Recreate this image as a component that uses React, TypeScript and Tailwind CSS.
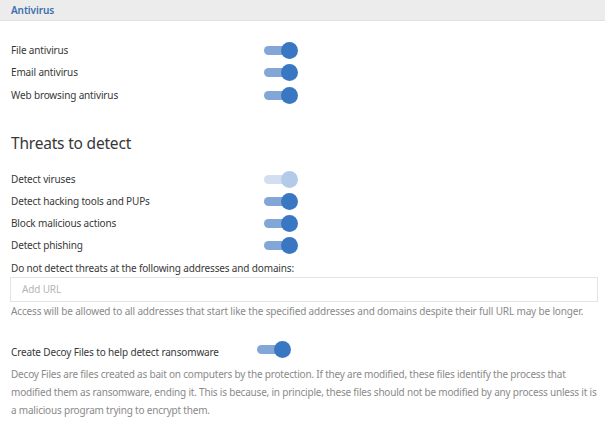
type ToggleProps = { disabled?: boolean };

function Toggle({ disabled }: ToggleProps) {
  return (
    <div className="relative w-[34px] h-[17px] shrink-0">
      <div
        className={`absolute left-0 top-[4px] w-[26px] h-[9px] rounded-full ${
          disabled ? "bg-[#d3dff0]" : "bg-[#82a6d6]"
        }`}
      />
      <div
        className={`absolute right-0 top-0 w-[17px] h-[17px] rounded-full ${
          disabled ? "bg-[#b3cae8]" : "bg-[#3a77c3]"
        }`}
      />
    </div>
  );
}

function Row({ label, disabled, h }: { label: string; disabled?: boolean; h: string }) {
  return (
    <div className={`flex items-center ${h}`}>
      <span className="w-[253px] shrink-0 text-[10px] tracking-[-0.15px] text-[#383838]">{label}</span>
      <Toggle disabled={disabled} />
    </div>
  );
}

export default function App() {
  return (
    <div
      className="w-[605px] h-[427px] bg-white overflow-hidden"
      style={{ fontFamily: '"Noto Sans", "Open Sans", sans-serif' }}
    >
      <div className="h-[21px] bg-[#ececec] border-b border-[#e2e2e2] px-[11px] flex items-center">
        <span className="text-[10px] font-semibold tracking-[-0.1px] text-[#3b6fae]">Antivirus</span>
      </div>

      <div className="px-[11px]">
        <div className="mt-[18px]">
          <Row label="File antivirus" h="h-[22.5px]" />
          <Row label="Email antivirus" h="h-[22.5px]" />
          <Row label="Web browsing antivirus" h="h-[22.5px]" />
        </div>

        <h2 className="mt-[24px] h-[24px] leading-[24px] text-[15.5px] tracking-[-0.2px] text-[#383838]">
          Threats to detect
        </h2>

        <div className="mt-[14px]">
          <Row label="Detect viruses" disabled h="h-[22px]" />
          <Row label="Detect hacking tools and PUPs" h="h-[22px]" />
          <Row label="Block malicious actions" h="h-[22px]" />
          <Row label="Detect phishing" h="h-[22px]" />
        </div>

        <p className="mt-[3px] text-[10px] tracking-[-0.15px] leading-[16px] text-[#383838]">
          Do not detect threats at the following addresses and domains:
        </p>
        <div className="mt-[1px] w-[588px] -ml-[1px] h-[25px] border border-[#e3e3e3] flex items-center px-[11px]">
          <span className="text-[10px] tracking-[-0.15px] text-[#b5b5b5]">Add URL</span>
        </div>
        <p className="mt-[1px] text-[10px] tracking-[-0.15px] leading-[16px] text-[#8a8a8a]">
          Access will be allowed to all addresses that start like the specified addresses and domains despite their full URL may be longer.
        </p>

        <div className="mt-[22px] flex items-start h-[22px]">
          <span className="w-[246px] shrink-0 pt-[4px] text-[10px] tracking-[-0.15px] text-[#383838]">
            Create Decoy Files to help detect ransomware
          </span>
          <Toggle />
        </div>
        <p className="mt-[2px] -mr-[4px] text-[10px] tracking-[-0.2px] leading-[18px] text-[#8a8a8a]">
          Decoy Files are files created as bait on computers by the protection. If they are modified, these files identify the process that modified them as ransomware, ending it. This is because, in principle, these files should not be modified by any process unless it is a malicious program trying to encrypt them.
        </p>
      </div>
    </div>
  );
}
